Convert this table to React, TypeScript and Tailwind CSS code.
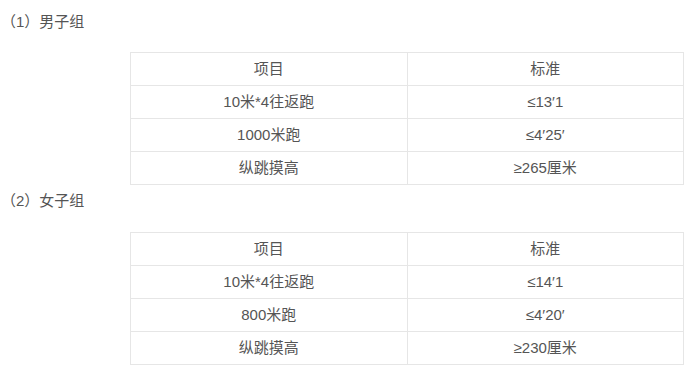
const groups = [
  {
    title: "（1）男子组",
    rows: [
      ["10米*4往返跑", "≤13′1"],
      ["1000米跑", "≤4′25′"],
      ["纵跳摸高", "≥265厘米"],
    ],
  },
  {
    title: "（2）女子组",
    rows: [
      ["10米*4往返跑", "≤14′1"],
      ["800米跑", "≤4′20′"],
      ["纵跳摸高", "≥230厘米"],
    ],
  },
];

function StandardTable({ rows }: { rows: string[][] }) {
  return (
    <table className="ml-[130px] w-[554px] table-fixed border-collapse text-center">
      <tbody>
        <tr className="h-[33px]">
          <td className="border border-[#e6e6e6]">项目</td>
          <td className="border border-[#e6e6e6]">标准</td>
        </tr>
        {rows.map(([name, value]) => (
          <tr key={name} className="h-[33px]">
            <td className="border border-[#e6e6e6]">{name}</td>
            <td className="border border-[#e6e6e6]">{value}</td>
          </tr>
        ))}
      </tbody>
    </table>
  );
}

export default function App() {
  return (
    <div
      className="h-[374px] w-[696px] bg-white pt-[10px] text-[15px] text-[#555]"
      style={{ fontFamily: '"Liberation Sans", "Noto Sans CJK SC", sans-serif' }}
    >
      <p className="h-[24px] pl-[1px] leading-[24px]">{groups[0].title}</p>
      <div className="mt-[18px]">
        <StandardTable rows={groups[0].rows} />
      </div>
      <p className="mt-[4px] h-[24px] pl-[1px] leading-[24px]">{groups[1].title}</p>
      <div className="mt-[19px]">
        <StandardTable rows={groups[1].rows} />
      </div>
    </div>
  );
}
